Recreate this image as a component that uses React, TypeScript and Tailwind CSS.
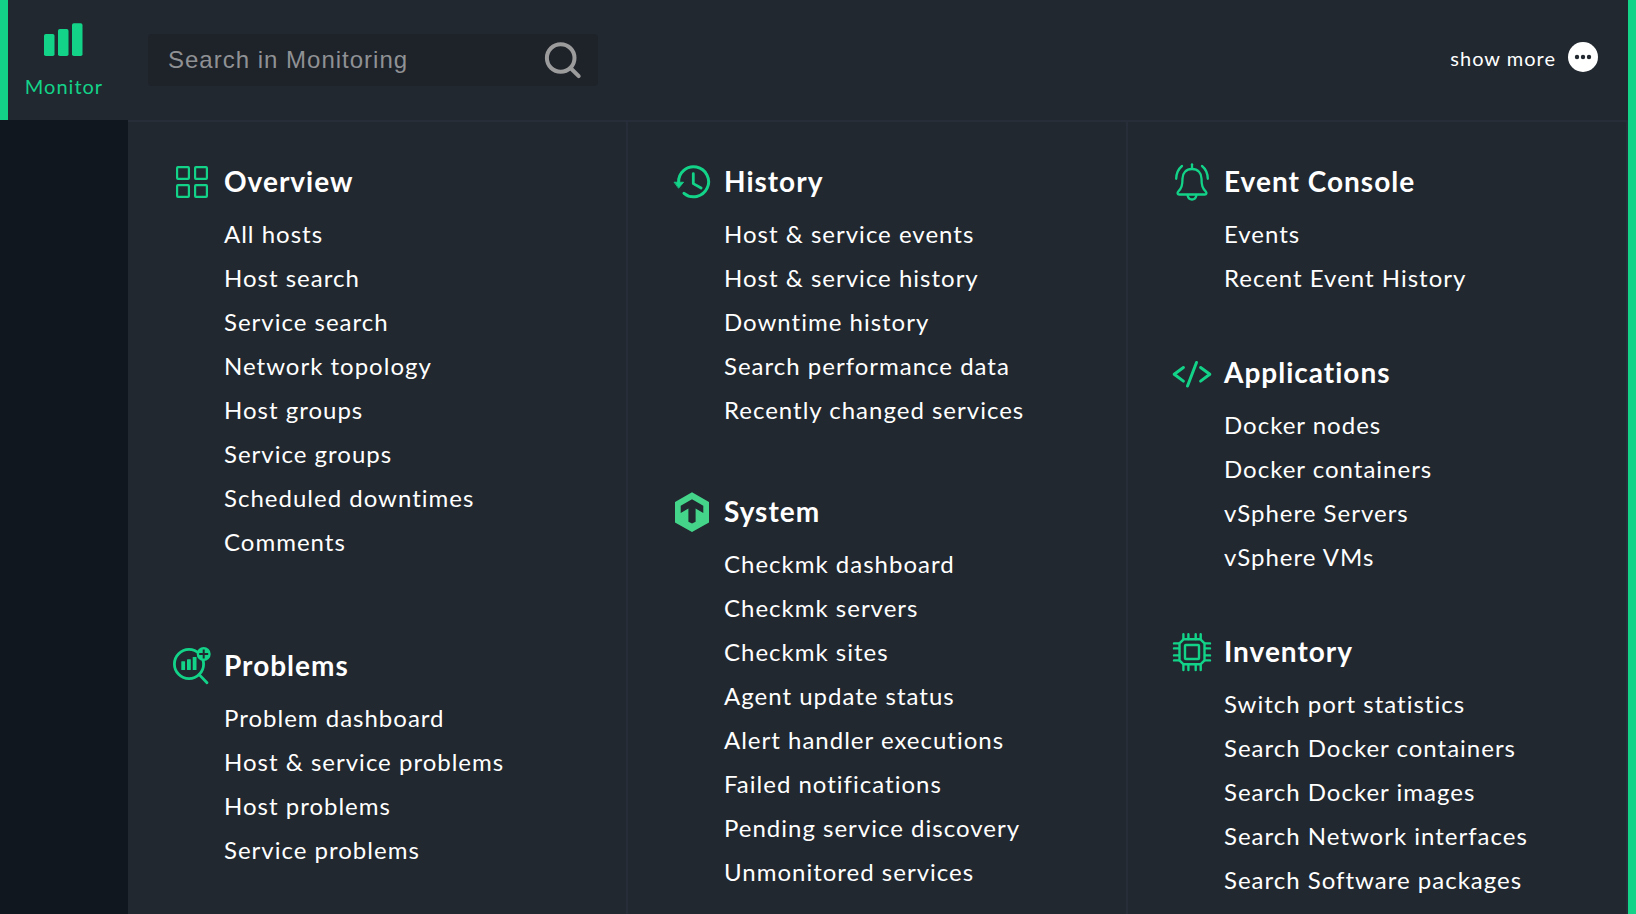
import React from "react";

type Section = { title: string; icon: React.ReactNode; items: string[] };
type Column = { gap: string; sections: Section[] };

function Icon({ children }: { children: React.ReactNode }) {
  return (
    <svg
      aria-hidden="true"
      viewBox="0 0 40 40"
      className="h-10 w-10 shrink-0 overflow-visible text-[#13d389]"
      fill="none"
      stroke="currentColor"
      strokeLinecap="round"
      strokeLinejoin="round"
    >
      {children}
    </svg>
  );
}

const OverviewIcon = (
  <Icon>
    <g strokeWidth="2.2">
      <rect x="5.1" y="6.1" width="11.8" height="11.8" rx="0.8" />
      <rect x="23.1" y="6.1" width="11.8" height="11.8" rx="0.8" />
      <rect x="5.1" y="24.1" width="11.8" height="11.8" rx="0.8" />
      <rect x="23.1" y="24.1" width="11.8" height="11.8" rx="0.8" />
    </g>
  </Icon>
);

const ProblemsIcon = (
  <Icon>
    <circle cx="17" cy="19" r="14.6" strokeWidth="2.8" />
    <path d="M27.2 29.6L35 37.8" strokeWidth="2.8" />
    <g fill="currentColor" stroke="none">
      <rect x="9.3" y="16.3" width="3.8" height="8.8" rx="0.5" />
      <rect x="15" y="14.3" width="3.8" height="10.8" rx="0.5" />
      <rect x="20.7" y="12" width="3.8" height="13.1" rx="0.5" />
      <circle cx="31.7" cy="9" r="7" />
    </g>
    <path d="M27.2 9h9M31.7 4.5v9" stroke="#21282f" strokeWidth="2" strokeLinecap="butt" />
  </Icon>
);

const HistoryIcon = (
  <Icon>
    <path d="M6.6 21.5A15 15 0 1 1 12 32.3" strokeWidth="3" />
    <path d="M2.4 21.2h9.2l-4.8 5.8z" fill="currentColor" strokeWidth="0.8" />
    <path d="M21.3 12.6v10l7.8 4.4" strokeWidth="2.8" />
  </Icon>
);

const SystemIcon = (
  <Icon>
    <path
      d="M20 1.3L37 11v20.5L20 41 3 31.5V11zM20 8.3L8.7 14.7v7.3L16.4 17.4v13.4l3.6 1.6 3.6-1.6V17.4l7.7 4.6V14.7z"
      fill="#44d58a"
      fillRule="evenodd"
      stroke="none"
    />
  </Icon>
);

const EventIcon = (
  <Icon>
    <g strokeWidth="2.3">
      <path d="M20 3.3v4" />
      <path d="M20 8C14 8 10.5 12.2 10.5 17.5c0 7-1 9.5-4.2 13-1.3 1.5-.8 3 .9 3h25.6c1.7 0 2.2-1.5.9-3-3.2-3.5-4.2-6-4.2-13C29.5 12.2 26 8 20 8z" />
      <path d="M15.6 34.5c.6 2.7 2.2 4 4.4 4s3.8-1.3 4.4-4" />
      <path d="M10 5C6.3 8 4.3 12.5 4.2 17.8M30 5c3.7 3 5.7 7.5 5.8 12.8" />
    </g>
  </Icon>
);

const ApplicationsIcon = (
  <Icon>
    <path
      d="M11.4 15.5L2.2 22.3l9.2 6.8M28.6 15.5l9.2 6.8-9.2 6.8M24.5 10.5L15.5 34"
      strokeWidth="3"
    />
  </Icon>
);

const InventoryIcon = (
  <Icon>
    <g strokeWidth="2.4">
      <path d="M11.5 8.3h17l4 4v17l-4 4h-17l-4-4v-17z" />
      <rect x="13" y="14" width="14" height="14" rx="0.8" />
      <path d="M11.4 3.2V8M16.4 3.2V8M23.7 3.2V8M28.7 3.2V8" />
      <path d="M11.4 34v5M16.4 34v5M23.7 34v5M28.7 34v5" />
      <path d="M2 12.4h5M2 17.4h5M2 24.4h5M2 29.4h5" />
      <path d="M33 12.4h5M33 17.4h5M33 24.4h5M33 29.4h5" />
    </g>
  </Icon>
);

const columns: Column[] = [
  {
    gap: "gap-[77px]",
    sections: [
      {
        title: "Overview",
        icon: OverviewIcon,
        items: [
          "All hosts",
          "Host search",
          "Service search",
          "Network topology",
          "Host groups",
          "Service groups",
          "Scheduled downtimes",
          "Comments",
        ],
      },
      {
        title: "Problems",
        icon: ProblemsIcon,
        items: ["Problem dashboard", "Host & service problems", "Host problems", "Service problems"],
      },
    ],
  },
  {
    gap: "gap-[55px]",
    sections: [
      {
        title: "History",
        icon: HistoryIcon,
        items: [
          "Host & service events",
          "Host & service history",
          "Downtime history",
          "Search performance data",
          "Recently changed services",
        ],
      },
      {
        title: "System",
        icon: SystemIcon,
        items: [
          "Checkmk dashboard",
          "Checkmk servers",
          "Checkmk sites",
          "Agent update status",
          "Alert handler executions",
          "Failed notifications",
          "Pending service discovery",
          "Unmonitored services",
        ],
      },
    ],
  },
  {
    gap: "gap-12",
    sections: [
      { title: "Event Console", icon: EventIcon, items: ["Events", "Recent Event History"] },
      {
        title: "Applications",
        icon: ApplicationsIcon,
        items: ["Docker nodes", "Docker containers", "vSphere Servers", "vSphere VMs"],
      },
      {
        title: "Inventory",
        icon: InventoryIcon,
        items: [
          "Switch port statistics",
          "Search Docker containers",
          "Search Docker images",
          "Search Network interfaces",
          "Search Software packages",
        ],
      },
    ],
  },
];

function MenuSection({ title, icon, items }: Section) {
  return (
    <section>
      <h2 className="mb-[7px] flex h-12 items-center gap-3 text-[28px] font-bold">
        {icon}
        {title}
      </h2>
      <ul className="pl-[52px]">
        {items.map((item) => (
          <li key={item} className="text-2xl leading-[44px]">
            <a href="#" className="hover:text-[#13d389]">
              {item}
            </a>
          </li>
        ))}
      </ul>
    </section>
  );
}

export default function App() {
  return (
    <div className="flex min-h-screen bg-[#21282f] font-['Lato',sans-serif] tracking-[1px] text-white">
      <aside className="flex w-32 shrink-0 flex-col bg-[#10171e]">
        <a
          href="#"
          className="flex h-[120px] flex-col items-center gap-4 border-l-8 border-[#13d389] bg-[#21282f] pt-5 pr-2 text-xl text-[#13d389]"
        >
          <svg aria-hidden="true" viewBox="0 0 40 38" className="h-[38px] w-10" fill="currentColor">
            <rect x="0" y="14" width="10.5" height="22" rx="1.8" />
            <rect x="14" y="9" width="10.5" height="27" rx="1.8" />
            <rect x="28" y="3.3" width="10.5" height="32.7" rx="1.8" />
          </svg>
          <span className="leading-6">Monitor</span>
        </a>
      </aside>

      <div className="flex min-w-0 flex-1 flex-col border-r-8 border-[#13d389]">
        <header className="flex h-[122px] items-center justify-between border-b-2 border-[#272e39] pr-[30px] pl-5">
          <form role="search" className="flex h-[52px] w-[450px] items-center rounded bg-[#1e2229] pr-4 pl-5">
            <input
              type="text"
              aria-label="Search in Monitoring"
              placeholder="Search in Monitoring"
              className="h-full min-w-0 flex-1 bg-transparent font-['Liberation_Sans',sans-serif] text-2xl tracking-[1px] outline-none placeholder:text-[#8f9194]"
            />
            <button type="button" aria-label="Search" className="text-[#9c9c9d]">
              <svg
                aria-hidden="true"
                viewBox="0 0 40 40"
                className="h-10 w-10"
                fill="none"
                stroke="currentColor"
                strokeWidth="4"
                strokeLinecap="round"
              >
                <circle cx="18.7" cy="18" r="13.8" />
                <path d="M29 28.5l7.7 7.7" />
              </svg>
            </button>
          </form>
          <button type="button" className="flex items-center gap-3 pb-1.5 text-xl tracking-[1px]">
            <span className="pt-0.5 leading-6">show more</span>
            <svg aria-hidden="true" viewBox="0 0 30 30" className="h-[30px] w-[30px]">
              <circle cx="15" cy="15" r="15" fill="#fff" />
              <g fill="#21282f">
                <circle cx="9" cy="15" r="2.2" />
                <circle cx="15" cy="15" r="2.2" />
                <circle cx="21" cy="15" r="2.2" />
              </g>
            </svg>
          </button>
        </header>

        <nav aria-label="Monitor" className="grid flex-1 grid-cols-3">
          {columns.map((column) => (
            <div
              key={column.sections[0].title}
              className={`flex flex-col border-r-2 border-[#272e39] pt-[35px] pl-11 ${column.gap}`}
            >
              {column.sections.map((section) => (
                <MenuSection key={section.title} {...section} />
              ))}
            </div>
          ))}
        </nav>
      </div>
    </div>
  );
}
